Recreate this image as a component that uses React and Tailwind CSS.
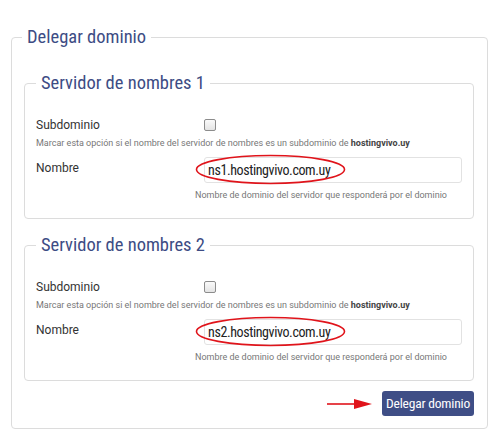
import React from 'react';

const Ellipse = () => (
  <svg className="absolute left-[-9px] top-[-3px] pointer-events-none" width="151" height="31" viewBox="0 0 151 31">
    <ellipse cx="75.5" cy="15.5" rx="74" ry="14" fill="none" stroke="#e0141b" strokeWidth="1.6" />
  </svg>
);

const Server = ({ n, className = '' }) => (
  <fieldset className={`border border-[#dcdcdc] rounded-[4px] px-[11px] pb-[17px] ${className}`}>
    <legend className="px-[5px] font-['Roboto_Condensed',sans-serif] text-[18.5px] leading-[24px] text-[#3d4c84]">
      Servidor de nombres {n}
    </legend>

    {/* subdominio */}
    <div className="flex items-center h-[20px] mt-[20px]">
      <span className="w-[168px] text-[12px] text-[#333]">Subdominio</span>
      <div className="w-[12px] h-[12px] border border-[#8c8c8c] rounded-[2px] bg-gradient-to-b from-[#fafafa] to-[#e4e4e4]" />
    </div>
    <div className="mt-[2px] text-[9px] leading-[12px] text-[#777]">
      Marcar esta opción si el nombre del servidor de nombres es un subdominio de{' '}
      <b className="text-[#444]">hostingvivo.uy</b>
    </div>

    {/* nombre */}
    <div className="flex items-center mt-[8px]">
      <span className="w-[168px] text-[12px] text-[#333] -mt-[4px]">Nombre</span>
      <div className="relative">
        <div className="w-[258px] h-[26px] border border-[#e2e2e2] rounded-[3px] bg-white pl-[3px] flex items-center font-['Roboto_Condensed',sans-serif] text-[14px] tracking-[-0.4px] text-[#222]">
          ns{n}.hostingvivo.com.uy
        </div>
        <Ellipse />
      </div>
    </div>
    <div className="mt-[6px] pl-[144px] text-center text-[9px] leading-[12px] text-[#777]">
      Nombre de dominio del servidor que responderá por el dominio
    </div>
  </fieldset>
);

export default function App() {
  return (
    <div className="w-[500px] h-[447px] bg-white pt-[26px] pl-[11px] font-['Roboto','Liberation_Sans',sans-serif]">
      <fieldset className="w-[477px] border border-[#dcdcdc] rounded-[4px] pl-[12px] pr-[13px] pb-[12px]">
        <legend className="-ml-[2px] px-[5px] font-['Roboto_Condensed',sans-serif] text-[18.5px] leading-[22px] text-[#3d4c84]">
          Delegar dominio
        </legend>

        <Server n={1} className="mt-[23px]" />
        <Server n={2} className="mt-[14px]" />

        <div className="flex justify-end items-center gap-[10px] mt-[10px]">
          <svg width="45" height="12" viewBox="0 0 45 12">
            <line x1="0" y1="6" x2="30" y2="6" stroke="#e0141b" strokeWidth="1.6" />
            <polygon points="27,1 45,6 27,11" fill="#e0141b" />
          </svg>
          <button className="h-[25px] px-[4px] rounded-[3px] bg-[#3f4e86] text-white font-['Roboto_Condensed',sans-serif] text-[13.5px] tracking-[-0.2px] leading-none">
            Delegar dominio
          </button>
        </div>
      </fieldset>
    </div>
  );
}
